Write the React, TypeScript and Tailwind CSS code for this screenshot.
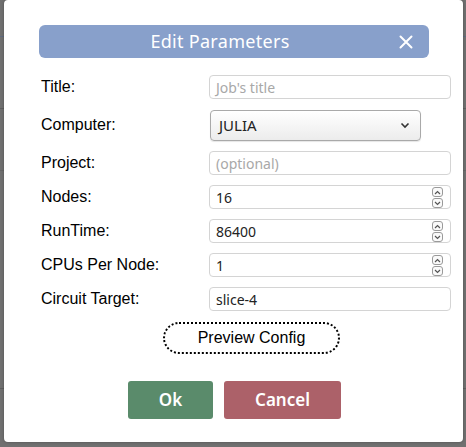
import React from "react";

const Spinner = () => (
  <div className="absolute right-[7px] top-[1px] flex flex-col gap-[1px]">
    {[0, 1].map((i) => (
      <div key={i} className="w-[11px] h-[10px] rounded-[3px] border border-[#9a9a9a] bg-[#fafafa] flex items-center justify-center">
        <svg width="7" height="5" viewBox="0 0 7 5">
          <path d={i === 0 ? "M1 4 L3.5 1.5 L6 4" : "M1 1 L3.5 3.5 L6 1"} fill="none" stroke="#555" strokeWidth="1.2" />
        </svg>
      </div>
    ))}
  </div>
);

const Field = ({ value, placeholder, spin }: { value?: string; placeholder?: string; spin?: boolean }) => (
  <div className="relative w-[242px] h-[24px] rounded-[4px] border border-[#d4d4d4] bg-white flex items-center pl-[6px] text-[14px] font-['Noto_Sans',sans-serif]">
    {value ? <span className="text-[#222]">{value}</span> : <span className="text-[#a8a8a8]">{placeholder}</span>}
    {spin && <Spinner />}
  </div>
);

const Row = ({ label, children, h = 24 }: { label: string; children: React.ReactNode; h?: number }) => (
  <div className="flex items-center" style={{ height: h }}>
    <div className="w-[168px] text-[16px] text-black font-['Liberation_Sans',sans-serif]">{label}</div>
    {children}
  </div>
);

export default function App() {
  return (
    <div className="relative w-[466px] h-[447px] bg-[#707070] overflow-hidden">
      <div className="absolute left-0 top-[36px] w-[466px] h-[1px] bg-[#5f6a80]" />
      <div className="absolute left-0 top-[108px] w-[466px] h-[1px] bg-[#5f5f5f]" />
      <div className="absolute left-0 top-[170px] w-[466px] h-[1px] bg-[#666]" />
      <div className="absolute left-0 top-[388px] w-[466px] h-[1px] bg-[#5f5f5f]" />
      <div className="absolute left-[4px] top-0 w-[459px] h-[442px] bg-white rounded-[4px] shadow-[0_0_3px_rgba(0,0,0,0.3)]">
        <div className="ml-[35px] mt-[25px] w-[390px] h-[33px] rounded-[6px] bg-[#88a0cb] relative flex items-center justify-center pr-[28px]">
          <span className="text-white text-[18px] font-['Noto_Sans',sans-serif] tracking-[0.3px]">Edit Parameters</span>
          <svg className="absolute right-[16px] top-[10px]" width="14" height="14" viewBox="0 0 14 14">
            <path d="M1.5 1.5 L12.5 12.5 M12.5 1.5 L1.5 12.5" stroke="white" strokeWidth="2" strokeLinecap="round" />
          </svg>
        </div>
        <div className="ml-[37px] mt-[17px] flex flex-col gap-[10px]">
          <Row label="Title:">
            <Field placeholder="Job's title" />
          </Row>
          <Row label="Computer:" h={32}>
            <div className="w-[211px] h-[31px] ml-[1px] rounded-[4px] border border-[#a9a9a9] bg-gradient-to-b from-[#ffffff] to-[#ececec] flex items-center justify-between pl-[8px] pr-[10px] shadow-[0_1px_1px_rgba(0,0,0,0.1)]">
              <span className="text-[15px] text-[#222] font-['Noto_Sans',sans-serif]">JULIA</span>
              <svg width="10" height="7" viewBox="0 0 10 7">
                <path d="M1.5 1.5 L5 5 L8.5 1.5" fill="none" stroke="#333" strokeWidth="1.6" />
              </svg>
            </div>
          </Row>
          <Row label="Project:">
            <Field placeholder="(optional)" />
          </Row>
          <Row label="Nodes:">
            <Field value="16" spin />
          </Row>
          <Row label="RunTime:">
            <Field value="86400" spin />
          </Row>
          <Row label="CPUs Per Node:">
            <Field value="1" spin />
          </Row>
          <Row label="Circuit Target:">
            <Field value="slice-4" />
          </Row>
        </div>
        <div className="mt-[11px] ml-[159px]">
          <div className="w-[177px] h-[32px] rounded-full border-2 border-dotted border-black flex items-center justify-center text-[16px] text-black font-['Liberation_Sans',sans-serif]">
            Preview Config
          </div>
        </div>
        <div className="flex mt-[27px] ml-[124px] gap-[11px]">
          <div className="w-[85px] h-[38px] rounded-[3px] bg-[#5a8b6b] flex items-center justify-center text-white text-[17px] font-semibold font-['Noto_Sans',sans-serif]">Ok</div>
          <div className="w-[117px] h-[38px] rounded-[3px] bg-[#ac6169] flex items-center justify-center text-white text-[17px] font-semibold font-['Noto_Sans',sans-serif]">Cancel</div>
        </div>
      </div>
    </div>
  );
}
